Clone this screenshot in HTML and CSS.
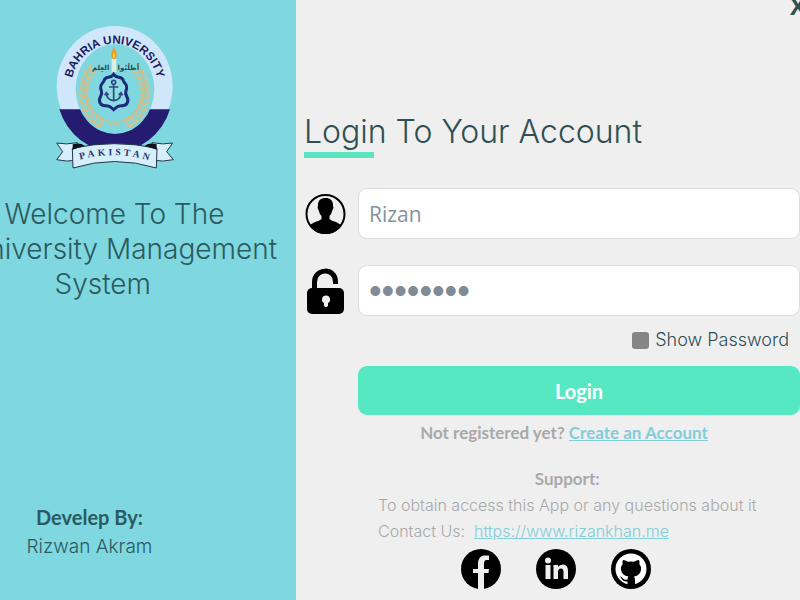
FILE: index.html
```html
<!DOCTYPE html>
<html lang="en">
<head>
<meta charset="utf-8">
<title>University Management System - Login</title>
<link rel="stylesheet" href="styles.css">
</head>
<body>
<aside class="brand">
  <svg class="crest" viewBox="45 30 357 432" role="img" aria-label="Bahria University crest">
    <defs>
      <path id="arc-top" d="M94 216 A130 130 0 0 1 354 216"/>
      <path id="arc-ribbon" d="M98 441 Q223 398 352 445"/>
      <g id="leaf">
        <path d="M130 246 Q113 240 114 222 Q128 228 130 246Z"/>
        <path d="M130 246 Q131 230 146 225 Q147 240 130 246Z"/>
      </g>
      <g id="branch">
        <use href="#leaf" transform="rotate(44 220 235)"/>
        <use href="#leaf" transform="rotate(32 220 235)"/>
        <use href="#leaf" transform="rotate(20 220 235)"/>
        <use href="#leaf" transform="rotate(8 220 235)"/>
        <use href="#leaf" transform="rotate(-4 220 235)"/>
        <use href="#leaf" transform="rotate(-16 220 235)"/>
        <use href="#leaf" transform="rotate(-28 220 235)"/>
        <use href="#leaf" transform="rotate(-40 220 235)"/>
        <use href="#leaf" transform="rotate(-52 220 235)"/>
        <use href="#leaf" transform="rotate(-64 220 235)"/>
        <path d="M148 170 C112 220 132 300 240 322" fill="none" stroke="#c9bf8e" stroke-width="4"/>
      </g>
    </defs>
    <ellipse cx="224" cy="214" rx="174" ry="181" fill="#cfe6fb"/>
    <path d="M58 283 H390 A174 181 0 0 1 58 283Z" fill="#251c72"/>
    <ellipse cx="225" cy="222" rx="118" ry="135" fill="#7fd7df"/>
    <g fill="#cdc292" transform="translate(0 -24) scale(1 1.1)">
      <use href="#branch"/>
      <use href="#branch" transform="translate(446 0) scale(-1 1)"/>
    </g>
    <text class="crest-name"><textPath href="#arc-top" startOffset="50%">BAHRIA UNIVERSITY</textPath></text>
    <path d="M215 132 H229 V172 H215Z" fill="#d9efdf"/>
    <path d="M222 94 C226 108 232 114 230 124 C228 136 216 136 214 124 C212 114 219 106 222 94Z" fill="#f39a1f"/>
    <path d="M222 112 Q228 124 222 130 Q216 124 222 112Z" fill="#ffd84e"/>
    <text class="crest-motto" x="182" y="166">العِلمَ</text>
    <text class="crest-motto" x="265" y="166">اُطلُبُوا</text>
    <path d="M221 178 C212 192 196 182 192 197 C189 207 180 206 182 219 C184 231 189 232 182 244 C173 260 182 273 198 272 C210 271 214 278 221 284 C228 278 232 271 244 272 C260 273 269 260 260 244 C253 232 258 231 260 219 C262 206 253 207 250 197 C246 182 230 192 221 178Z" fill="#8edbe2" stroke="#1c2a7a" stroke-width="9"/>
    <g fill="none" stroke="#2c4b84" stroke-width="5">
      <circle cx="221" cy="202" r="6"/>
      <path d="M221 208 V256 M207 216 H235 M199 234 Q201 256 221 257 Q241 256 243 234 M194 241 L199 233 L206 240 M236 240 L243 233 L248 241"/>
    </g>
    <g stroke="#25364a" stroke-width="3" fill="#d6effb">
      <path d="M50 384 Q78 390 112 383 V435 Q80 442 50 434 L68 410Z"/>
      <path d="M398 384 Q370 390 336 383 V435 Q368 442 400 434 L380 410Z"/>
      <path d="M97 400 Q224 372 351 400 L349 459 Q224 420 99 459Z"/>
    </g>
    <path d="M98 388 Q120 382 134 392 Q116 398 98 404Z M350 388 Q328 382 314 392 Q332 398 350 404Z" fill="#10131c"/>
    <text class="crest-country"><textPath href="#arc-ribbon" startOffset="51%">PAKISTAN</textPath></text>
  </svg>
  <h2 class="welcome">
    <span>Welcome To The</span>
    <span>&nbsp; University Management</span>
    <span>System &nbsp;&nbsp;</span>
  </h2>
  <div class="credit">
    <strong>Develep By:</strong>
    <span>Rizwan Akram</span>
  </div>
</aside>

<main class="panel">
  <button class="close" type="button" aria-label="Close">X</button>
  <h1 class="title">Login To Your Account</h1>
  <form class="form">
    <label class="icon" for="user" aria-label="User name">
      <svg viewBox="0 0 42 42" width="42" height="42">
        <circle cx="21.500" cy="21" r="19" fill="#efefef" stroke="#000" stroke-width="2"/>
        <path d="M21.500 5 C26.500 5 29.500 8 29 13 Q30 15 28.500 17 Q27.500 21 25.500 23 V26 Q27.500 28 32 29 Q36 31 37.500 33 A20 20 0 0 1 5.500 33 Q6.500 31 11 29 Q15.500 28 17.500 26 V23 Q15.500 21 14.500 17 Q13 15 14 13 C13.500 8 16.500 5 21.500 5Z"/>
      </svg>
    </label>
    <input class="field" id="user" type="text" value="Rizan">
    <label class="icon" for="pass" aria-label="Password">
      <svg viewBox="0 0 42 46" width="42" height="46">
        <path d="M10.500 22 V14 C10.500 0 31.500 -1 31.500 14 V16" fill="none" stroke="#000" stroke-width="5"/>
        <rect x="3" y="20" width="37" height="26" rx="5"/>
        <path d="M22 27.500 A4 4 0 0 1 24 35 V38 Q22 40 20 38 V35 A4 4 0 0 1 22 27.500Z" fill="#efefef"/>
      </svg>
    </label>
    <input class="field field-secret" id="pass" type="password" value="password">
    <div class="actions">
      <label class="show"><input type="checkbox">Show Password</label>
      <button class="submit" type="submit">Login</button>
      <p class="register">Not registered yet? <a href="#">Create an Account</a></p>
    </div>
  </form>
  <section class="support">
    <h3>Support:</h3>
    <p>To obtain access this App or any questions about it</p>
    <p>Contact Us: &nbsp;<a href="#">https://www.rizankhan.me</a></p>
  </section>
  <nav class="social">
    <a href="#" aria-label="Facebook">
      <svg viewBox="0 0 40 40" width="40" height="40">
        <circle cx="20" cy="20" r="20"/>
        <path d="M17 40 V24 H12 V20 H17 V15 C17 9 20 6.500 24 6.500 H28 V11 H25.500 Q23 11 23 15 V20 H28 L27.500 24 H23 V40Z" fill="#efefef"/>
      </svg>
    </a>
    <a href="#" aria-label="LinkedIn">
      <svg viewBox="0 0 40 40" width="40" height="40">
        <circle cx="20" cy="20" r="20"/>
        <g fill="#efefef">
          <circle cx="12" cy="11.500" r="3"/>
          <path d="M9.500 16 H14.500 V30 H9.500Z M17.500 16 H22 V18 Q23.500 15.500 27 15.500 Q32 15.500 32 22 V30 H27.500 V23 Q27.500 19.500 25 19.500 Q22 19.500 22 23 V30 H17.500Z"/>
        </g>
      </svg>
    </a>
    <a href="#" aria-label="GitHub">
      <svg viewBox="0 0 40 40" width="40" height="40">
        <circle cx="20" cy="20" r="20"/>
        <circle cx="20" cy="20" r="15.500" fill="#fff"/>
        <path d="M12 11 Q14.500 11 17 12.800 Q20 12 23 12.800 Q25.500 11 28 11 Q29 13 28.300 15 Q30.500 17.500 30 20.500 Q29.500 26.500 23 27.500 Q24 29 24 31 V36 H16.500 V32.500 Q12.500 33 11 30.500 Q10 28.500 8.500 27.500 Q10.500 27.300 12 29.500 Q13.500 31.300 16.500 30.500 Q16.500 28.500 17.500 27.500 Q10.500 26.500 10 20.500 Q9.500 17.500 11.700 15 Q11 13 12 11Z"/>
      </svg>
    </a>
  </nav>
</main>
</body>
</html>
```

FILE: styles.css
```css
* {
  box-sizing: border-box;
}

body {
  margin: 0;
  min-height: 100vh;
  display: flex;
  overflow: hidden;
  background: #efefef;
  font-family: Inter, "Open Sans", sans-serif;
  font-weight: 300;
  color: #2f4f55;
}

h1, h2, h3, p {
  margin: 0;
  font-weight: 300;
}

.brand {
  flex: 0 0 37%;
  display: flex;
  flex-direction: column;
  align-items: center;
  padding: 25px 67px 38px 0;
  background: #7fd7df;
  color: #2b5a62;
  overflow: hidden;
}

.crest {
  width: 119px;
  height: 144px;
}

.crest-name {
  font: 700 35px "Liberation Sans", sans-serif;
  fill: #1b1d5e;
  text-anchor: middle;
}

.crest-motto {
  font: 700 21px "DejaVu Sans", sans-serif;
  fill: #2a4a55;
  text-anchor: middle;
}

.crest-country {
  font: 700 29px "Liberation Serif", serif;
  fill: #2c3470;
  text-anchor: middle;
  letter-spacing: 9px;
}

.welcome {
  display: flex;
  flex-direction: column;
  align-items: center;
  margin-top: 28px;
  font-size: 28px;
  line-height: 35px;
  white-space: nowrap;
}

.credit {
  display: flex;
  flex-direction: column;
  align-items: center;
  margin-top: auto;
  padding-right: 50px;
  font-size: 19px;
  line-height: 30px;
}

.credit strong {
  font: 700 20px/30px Lato, sans-serif;
}

.panel {
  flex: 1;
  position: relative;
  padding: 112px 0 0 8px;
}

.close {
  position: absolute;
  top: -8px;
  right: -6px;
  padding: 0;
  border: 0;
  background: none;
  font: 700 24px/28px "Open Sans", sans-serif;
  color: #2f4f55;
}

.title {
  font-size: 32px;
  line-height: 40px;
}

.title::after {
  content: "";
  display: block;
  width: 70px;
  height: 6px;
  background: #5ae4c0;
}

.form {
  display: grid;
  grid-template-columns: 42px 1fr;
  column-gap: 12px;
  row-gap: 26px;
  align-items: center;
  margin-top: 30px;
}

.icon svg {
  display: block;
}

.field {
  width: 100%;
  height: 51px;
  padding: 0 10px;
  border: 1px solid #dedede;
  border-radius: 9px;
  background: #fff;
  font: 21px "Open Sans", sans-serif;
  color: #85919e;
}

.field-secret {
  font: 36px "Liberation Sans", sans-serif;
  color: #7f8b97;
}

.actions {
  grid-column: 2;
  margin-top: -14px;
}

.show {
  display: flex;
  justify-content: flex-end;
  align-items: center;
  gap: 6px;
  padding-right: 11px;
  font-size: 18px;
  line-height: 24px;
}

.show input {
  appearance: none;
  width: 17px;
  height: 17px;
  margin: 0;
  border-radius: 3px;
  background: #858585;
}

.submit {
  display: block;
  width: 100%;
  height: 49px;
  margin-top: 14px;
  border: 0;
  border-radius: 9px;
  background: #56e7c3;
  font: 700 20px Lato, sans-serif;
  color: #fff;
}

.register {
  margin-top: 6px;
  padding-right: 30px;
  text-align: center;
  font: 700 17px/24px Lato, sans-serif;
  color: #a9a9a9;
}

.support {
  width: fit-content;
  margin: 21px 0 0 74px;
  font-size: 16px;
  line-height: 26px;
  color: #a9a9a9;
}

.support h3 {
  text-align: center;
  font: 700 17px/26px Lato, sans-serif;
}

.register a,
.support a {
  color: #83cdd9;
}

.social {
  display: flex;
  gap: 35px;
  margin: 5px 0 0 157px;
}

.social svg {
  display: block;
}
```
